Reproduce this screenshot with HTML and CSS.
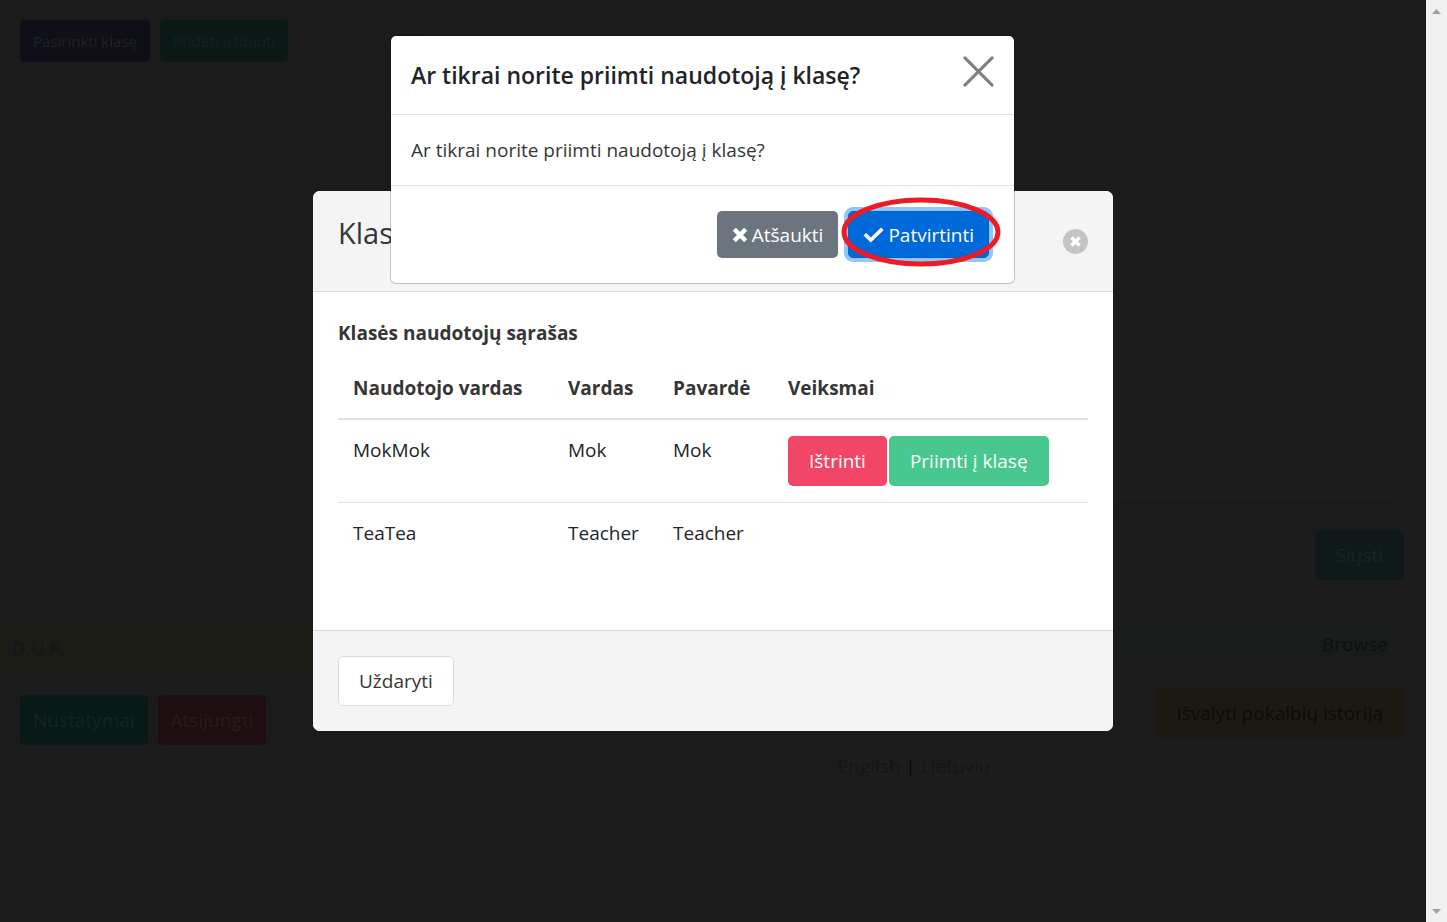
FILE: index.html
```
<!DOCTYPE html>
<html lang="lt">
<head>
<meta charset="utf-8">
<title>Klasės naudotojai</title>
<link rel="stylesheet" href="styles.css">
</head>
<body>
<div class="page">
  <aside class="side">
    <div class="side-actions">
      <button class="btn btn-small btn-choose" type="button">Pasirinkti klasę</button>
      <button class="btn btn-small btn-task" type="button">Pridėti užduotį</button>
    </div>
    <div class="faq"><a href="#duk">D.U.K.</a></div>
    <div class="side-account">
      <button class="btn btn-tight btn-settings" type="button">Nustatymai</button>
      <button class="btn btn-tight btn-logout" type="button">Atsijungti</button>
    </div>
  </aside>
  <main class="chat">
    <section class="messages"></section>
    <form class="send-row">
      <input class="message" type="text" aria-label="Žinutė">
      <button class="btn btn-send" type="button">Siųsti</button>
    </form>
    <div class="file-row">
      <button class="browse" type="button">Browse</button>
    </div>
    <button class="btn btn-clear" type="button">Išvalyti pokalbių istoriją</button>
    <nav class="languages"><a href="#en">English</a> | <a href="#lt">Lietuvių</a></nav>
  </main>
</div>
<div class="scrollbar">
  <svg width="9" height="5" viewBox="0 0 9 5"><path d="M0 5L4.500 0L9 5Z" fill="#a0a0a0"/></svg>
  <svg width="9" height="5" viewBox="0 0 9 5"><path d="M0 0L4.500 5L9 0Z" fill="#a0a0a0"/></svg>
</div>

<div class="overlay overlay-center">
  <section class="card" role="dialog" aria-labelledby="card-title">
    <header class="card-head">
      <h2 class="card-title" id="card-title">Klasė</h2>
      <button class="round-close" type="button" aria-label="Uždaryti langą">
        <svg width="13" height="13" viewBox="0 0 13 13"><path d="M2.500 2.500L10.500 10.500M10.500 2.500L2.500 10.500" stroke="#fff" stroke-width="3.400"/></svg>
      </button>
    </header>
    <div class="card-body">
      <strong class="list-title">Klasės naudotojų sąrašas</strong>
      <table class="users">
        <colgroup><col class="col-user"><col class="col-name"><col class="col-surname"><col></colgroup>
        <thead><tr><th>Naudotojo vardas</th><th>Vardas</th><th>Pavardė</th><th>Veiksmai</th></tr></thead>
        <tbody>
          <tr><td>MokMok</td><td>Mok</td><td>Mok</td><td><div class="actions"><button class="btn btn-delete" type="button">Ištrinti</button><button class="btn btn-accept" type="button">Priimti į klasę</button></div></td></tr>
          <tr><td>TeaTea</td><td>Teacher</td><td>Teacher</td><td></td></tr>
        </tbody>
      </table>
    </div>
    <footer class="card-foot"><button class="btn btn-plain" type="button">Uždaryti</button></footer>
  </section>
</div>

<div class="overlay overlay-top">
  <section class="dialog" role="dialog" aria-labelledby="dialog-title">
    <header class="dialog-head">
      <h1 class="dialog-title" id="dialog-title">Ar tikrai norite priimti naudotoją į klasę?</h1>
      <button class="close" type="button" aria-label="Uždaryti">
        <svg width="31" height="31" viewBox="0 0 32 32"><path d="M2 2L30 30M30 2L2 30" stroke="#808080" stroke-width="3.200" stroke-linecap="round"/></svg>
      </button>
    </header>
    <p class="dialog-body">Ar tikrai norite priimti naudotoją į klasę?</p>
    <footer class="dialog-foot">
      <button class="btn btn-dialog btn-cancel" type="button">
        <svg width="16" height="16" viewBox="0 0 16 16"><path d="M2.300 2.300L13.700 13.700M13.700 2.300L2.300 13.700" stroke="#fff" stroke-width="4.400"/></svg>Atšaukti</button>
      <button class="btn btn-dialog btn-confirm" type="button">
        <svg width="21" height="16" viewBox="0 0 21 16"><path d="M0.500 8.600L3.200 6L7.800 10.400L18 0.400L20.700 3L7.800 15.600Z" fill="#fff"/></svg>Patvirtinti
        <svg class="mark" viewBox="0 0 160 70"><ellipse cx="80" cy="35" rx="77" ry="32" fill="none" stroke="#ed1c24" stroke-width="5"/></svg>
      </button>
    </footer>
  </section>
</div>
</body>
</html>
```
FILE: styles.css
```
* { box-sizing: border-box; }

body {
  margin: 0;
  min-height: 100vh;
  display: flex;
  background: #1c1c1c;
  font-family: "Open Sans", "Noto Sans", sans-serif;
  font-size: 19px;
  line-height: 30px;
  color: #212529;
}

button, input { font: inherit; }
h1, h2, p { margin: 0; }
svg { display: block; }

.page { flex: 1; display: flex; }

.scrollbar {
  width: 21px;
  padding: 9px 0 8px;
  background: #f0f0f0;
  display: flex;
  flex-direction: column;
  justify-content: space-between;
  align-items: center;
}

.btn {
  height: 50px;
  padding: 0 20px;
  border: 1px solid transparent;
  border-radius: 5px;
  white-space: nowrap;
  color: #1c1c1c;
}
.btn-small { height: 42px; padding: 0 12px; font-size: 15px; }
.btn-tight { padding: 0 12px; }
.btn-choose { background: #0e0f18; color: #202024; }
.btn-task { background: #0a1916; color: #14211f; }
.btn-settings { background: #081a17; color: #132522; }
.btn-logout { background: #1e0e11; color: #2a1a1d; }
.btn-send { background: #10191a; color: #1a2425; }
.btn-clear { background: #1b1912; color: #0d0b08; align-self: flex-end; }

.side {
  width: 420px;
  height: 783px;
  background: #1b1b1b;
  display: flex;
  flex-direction: column;
}
.side-actions, .side-account { display: flex; gap: 10px; padding: 20px; }
.side-account { padding-bottom: 38px; }
.faq {
  margin-top: auto;
  padding: 12px;
  background: #1c1c17;
}
.faq a, .languages a { color: #10151f; text-decoration: none; }

.chat {
  flex: 1;
  padding: 0 22px 0 4px;
  display: flex;
  flex-direction: column;
}
.messages {
  height: 500px;
  margin-bottom: 30px;
  border: 1px solid #1b1b1b;
  border-radius: 8px;
  box-shadow: 0 8px 12px #1b1b1b;
}
.send-row { display: flex; gap: 16px; margin-bottom: 40px; }
.message {
  flex: 1;
  min-width: 0;
  border: 1px solid #1a1a1a;
  border-radius: 5px;
  background: #1b1b1b;
}
.file-row {
  height: 48px;
  margin-bottom: 20px;
  display: flex;
  justify-content: flex-end;
  border: 1px solid #171a19;
  border-radius: 5px;
  background: #191c1b;
}
.browse {
  padding: 0 15px;
  border: 0;
  border-left: 1px solid #171a19;
  background: transparent;
  color: #0e1010;
}
.languages { margin-top: 13px; text-align: center; color: #090909; }

.overlay { position: absolute; inset: 0 21px 0 0; display: flex; justify-content: center; }
.overlay-center { align-items: center; }
.overlay-top { align-items: flex-start; padding: 35px 21px 0 0; }

.card { width: 100%; max-width: 800px; border-radius: 7px; overflow: hidden; background: #fff; }
.card-head, .card-foot { padding: 25px; background: #f4f4f4; display: flex; align-items: center; }
.card-head { justify-content: space-between; border-bottom: 1px solid #dbdbdb; }
.card-foot { border-top: 1px solid #dbdbdb; }
.card-title { padding-bottom: 16px; font-size: 29px; line-height: 34px; font-weight: 400; color: #363636; }
.round-close {
  width: 25px;
  height: 25px;
  padding: 0;
  border: 0;
  border-radius: 50%;
  background: #c4c4c4;
  display: flex;
  align-items: center;
  justify-content: center;
}
.card-body { padding: 26px 25px 67px; }
.list-title { display: block; margin-bottom: 10px; color: #363636; font-weight: 700; }

.users { width: 100%; border-collapse: collapse; table-layout: fixed; }
.users th, .users td { padding: 15px; text-align: left; vertical-align: top; }
.users th { border-bottom: 2px solid #dee2e6; color: #363636; font-weight: 700; white-space: nowrap; }
.users tbody tr + tr td { border-top: 1px solid #dee2e6; }
.col-user { width: 215px; }
.col-name { width: 105px; }
.col-surname { width: 115px; }
.actions { display: flex; gap: 2px; padding: 1px 0; }
.btn-delete { background: #f14668; color: #fff; }
.btn-accept { background: #48c78e; color: #fff; }
.btn-plain { background: #fff; border-color: #dbdbdb; color: #363636; }

.dialog {
  width: 100%;
  max-width: 625px;
  border: 1px solid rgba(0, 0, 0, 0.2);
  border-radius: 6px;
  background: #fff;
  background-clip: padding-box;
}
.dialog-head {
  padding: 20px;
  border-bottom: 1px solid #dee2e6;
  display: flex;
  justify-content: space-between;
  align-items: flex-start;
}
.dialog-title { font-size: 23px; line-height: 38px; font-weight: 600; }
.close { padding: 0; border: 0; background: transparent; }
.dialog-body { padding: 20px; color: #363636; }
.dialog-foot {
  padding: 25px;
  border-top: 1px solid #dee2e6;
  display: flex;
  justify-content: flex-end;
  gap: 10px;
}
.btn-dialog {
  position: relative;
  height: 47px;
  padding: 0 14px;
  display: flex;
  align-items: center;
  gap: 4px;
  color: #fff;
}
.btn-cancel { background: #6c757d; }
.btn-confirm { background: #0069d9; border-color: #0062cc; box-shadow: 0 0 0 4px #93c5fb; }
.mark { position: absolute; left: -8px; top: -15px; width: 160px; height: 70px; pointer-events: none; }
```
